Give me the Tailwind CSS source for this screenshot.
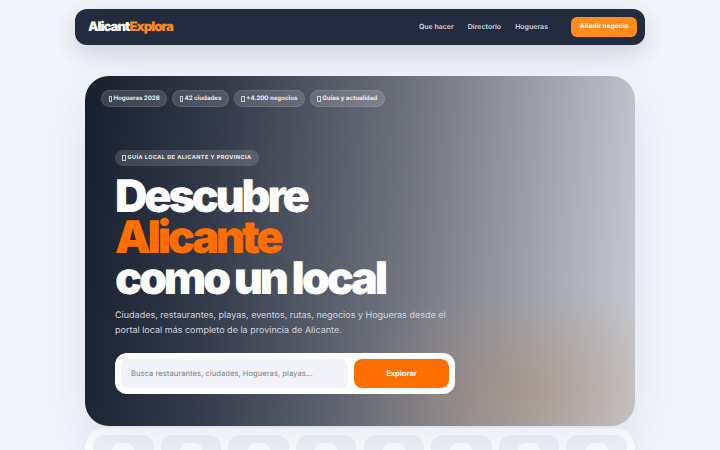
<!DOCTYPE html>
<html lang="es"><head><meta charset="utf-8"><script src="https://cdn.jsdelivr.net/npm/@tailwindcss/browser@4"></script></head>
<body class="m-0 h-[450px] w-[720px] overflow-hidden bg-[#f3f5fb] font-['Inter',sans-serif] [text-rendering:geometricPrecision]">
<div class="flex h-[450px] flex-col items-center overflow-hidden">
<header class="mt-[9px] flex h-[36px] w-[570px] shrink-0 items-center justify-between rounded-[12px] bg-[#232b3e] pl-[13px] pr-[8px] shadow-[0_8px_24px_rgba(26,34,51,0.18)]">
  <div class="mt-[2px] text-[13.2px] leading-none font-black tracking-[-0.95px] text-white">Alicant<span class="text-[#ff8c1a]">Explora</span></div>
  <nav class="flex items-center">
    <a class="mr-[14px] text-[7px] font-semibold text-[#d5d8e0]">Que hacer</a>
    <a class="mr-[14px] text-[7px] font-semibold text-[#d5d8e0]">Directorio</a>
    <a class="mr-[23px] text-[7px] font-semibold text-[#d5d8e0]">Hogueras</a>
    <a class="flex h-[20px] w-[66px] items-center justify-center rounded-[6px] bg-[#ff8c1a] text-[6.5px] font-bold text-white">Añadir negocio</a>
  </nav>
</header>
<section class="relative mt-[31px] h-[350px] w-[550px] shrink-0 overflow-hidden rounded-[24px] bg-[linear-gradient(95deg,#171e2e_0%,#333a4a_24%,#6f737e_57%,#c9ccd4_100%)] shadow-[0_16px_48px_rgba(60,80,140,0.12)]">
  <div class="absolute inset-0 bg-[radial-gradient(ellipse_190px_110px_at_81%_90%,rgba(180,135,95,0.38),rgba(190,150,120,0)_100%)]"></div>
  <div class="relative flex flex-col pl-[16px] pt-[14px]">
    <div class="flex gap-[5px]">
      <span class="flex h-[17px] items-center gap-[1.5px] rounded-full border border-white/10 bg-white/15 px-[6.5px] text-[6.1px] font-bold text-white/90"><i class="h-[6px] w-[3.5px] border-[0.5px] border-white/70"></i>Hogueras 2026</span>
      <span class="flex h-[17px] items-center gap-[1.5px] rounded-full border border-white/10 bg-white/15 px-[6.5px] text-[6.1px] font-bold text-white/90"><i class="h-[6px] w-[3.5px] border-[0.5px] border-white/70"></i>42 ciudades</span>
      <span class="flex h-[17px] items-center gap-[1.5px] rounded-full border border-white/10 bg-white/15 px-[6.5px] text-[6.1px] font-bold text-white/90"><i class="h-[6px] w-[3.5px] border-[0.5px] border-white/70"></i>+4.200 negocios</span>
      <span class="flex h-[17px] items-center gap-[1.5px] rounded-full border border-white/10 bg-white/15 px-[6.5px] text-[6.1px] font-bold text-white/90"><i class="h-[6px] w-[3.5px] border-[0.5px] border-white/70"></i>Guías y actualidad</span>
    </div>
    <div class="ml-[14px] mt-[43px] flex flex-col items-start">
      <span class="flex h-[16px] items-center gap-[2px] rounded-full bg-white/15 px-[7px] text-[5.5px] font-bold tracking-[0.45px] text-white/90"><i class="h-[6px] w-[3.5px] border-[0.5px] border-white/70"></i>GUÍA LOCAL DE ALICANTE Y PROVINCIA</span>
      <h1 class="mt-[9px] text-[45px] leading-[41px] font-black tracking-[-3.2px] text-white">Descubre<br><span class="text-[#ff6f00]">Alicante</span><br>como un local</h1>
      <p class="mt-[11px] text-[9px] leading-[14.5px] text-[#d5d8e0]">Ciudades, restaurantes, playas, eventos, rutas, negocios y Hogueras desde el<br>portal local más completo de la provincia de Alicante.</p>
      <form class="mt-[15px] flex h-[41px] w-[340px] gap-[6px] rounded-[12px] bg-white p-[6px]">
        <div class="flex flex-1 items-center rounded-[8px] bg-[#f1f3f8] pl-[10px] text-[7.6px] font-medium text-[#8b8f99]">Busca restaurantes, ciudades, Hogueras, playas...</div>
        <div class="flex w-[95px] items-center justify-center rounded-[8px] bg-[#ff6f00] text-[7.5px] font-bold text-white">Explorar</div>
      </form>
    </div>
  </div>
</section>
<div class="mt-[2px] flex h-[60px] w-[550px] shrink-0 justify-between rounded-[20px] bg-white px-[8px] pt-[7px] shadow-[0_8px_24px_rgba(60,80,140,0.08)]">
  <div class="flex h-[40px] w-[60.5px] justify-center rounded-[12px] bg-[#f1f3f7] pt-[8px]"><div class="h-[22px] w-[22px] rounded-[7px] bg-white"></div></div>
  <div class="flex h-[40px] w-[60.5px] justify-center rounded-[12px] bg-[#f1f3f7] pt-[8px]"><div class="h-[22px] w-[22px] rounded-[7px] bg-white"></div></div>
  <div class="flex h-[40px] w-[60.5px] justify-center rounded-[12px] bg-[#f1f3f7] pt-[8px]"><div class="h-[22px] w-[22px] rounded-[7px] bg-white"></div></div>
  <div class="flex h-[40px] w-[60.5px] justify-center rounded-[12px] bg-[#f1f3f7] pt-[8px]"><div class="h-[22px] w-[22px] rounded-[7px] bg-white"></div></div>
  <div class="flex h-[40px] w-[60.5px] justify-center rounded-[12px] bg-[#f1f3f7] pt-[8px]"><div class="h-[22px] w-[22px] rounded-[7px] bg-white"></div></div>
  <div class="flex h-[40px] w-[60.5px] justify-center rounded-[12px] bg-[#f1f3f7] pt-[8px]"><div class="h-[22px] w-[22px] rounded-[7px] bg-white"></div></div>
  <div class="flex h-[40px] w-[60.5px] justify-center rounded-[12px] bg-[#f1f3f7] pt-[8px]"><div class="h-[22px] w-[22px] rounded-[7px] bg-white"></div></div>
  <div class="flex h-[40px] w-[60.5px] justify-center rounded-[12px] bg-[#f1f3f7] pt-[8px]"><div class="h-[22px] w-[22px] rounded-[7px] bg-white"></div></div>
</div>
</div>
</body></html>
